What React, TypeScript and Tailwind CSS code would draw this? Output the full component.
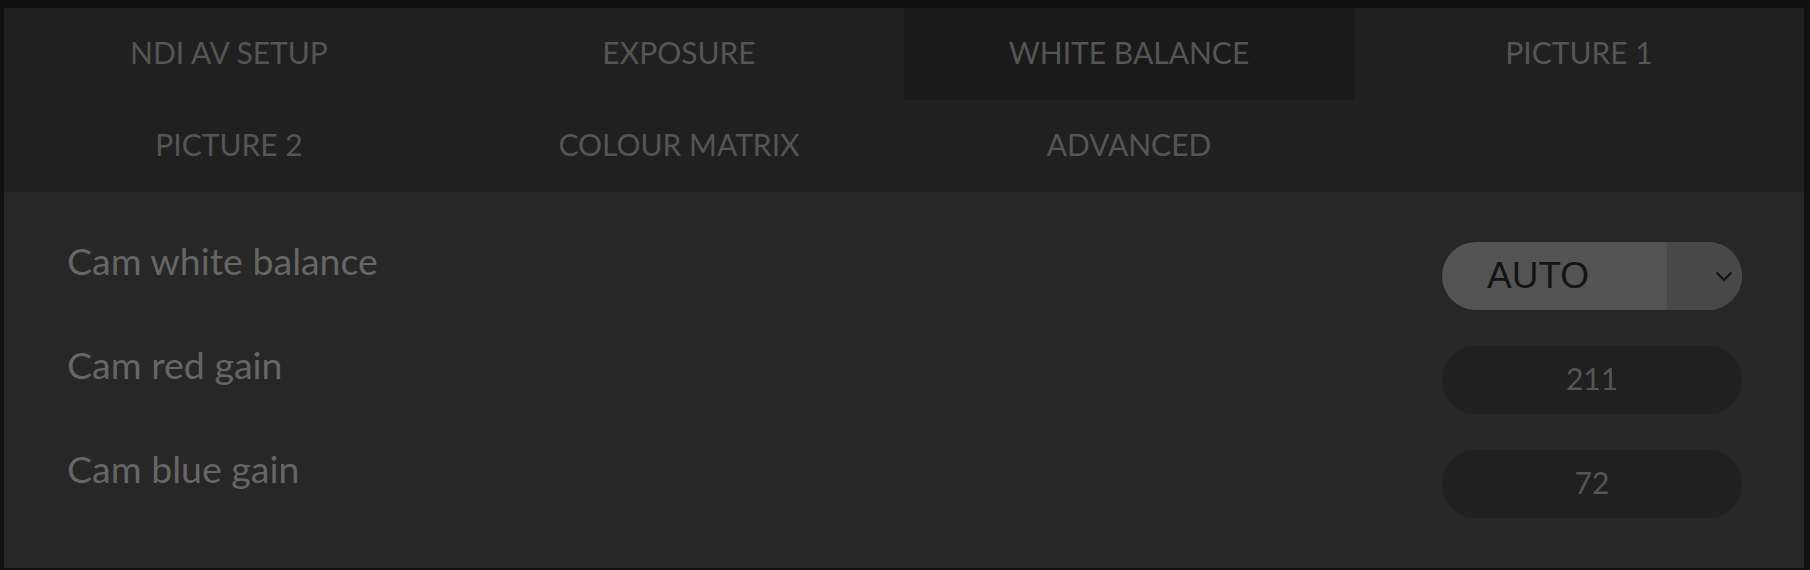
import { useState } from "react";

const tabs = [
  "NDI AV SETUP",
  "EXPOSURE",
  "WHITE BALANCE",
  "PICTURE 1",
  "PICTURE 2",
  "COLOUR MATRIX",
  "ADVANCED",
];

const lato = "font-['Lato','Liberation_Sans',sans-serif]";

function Chevron() {
  return (
    <svg width="18" height="11" viewBox="0 0 18 11" fill="none">
      <path d="M1.5 1.5 L9 9 L16.5 1.5" stroke="#141414" strokeWidth="2.2" />
    </svg>
  );
}

function ValueField({ value }: { value: string }) {
  return (
    <div
      className={`flex h-[68px] w-[300px] items-center justify-center rounded-full bg-[#202020] pb-[3px] text-[30px] text-[#555555] ${lato}`}
    >
      {value}
    </div>
  );
}

export default function App() {
  const [active, setActive] = useState("WHITE BALANCE");

  return (
    <div className="h-[570px] w-[1810px] bg-[#111111] pt-[8px] pl-[4px] pr-[6px] pb-[2px]">
      <div className="flex h-full flex-col">
        <div className="grid h-[184px] grid-cols-4 grid-rows-2 bg-[#202020]">
          {tabs.map((tab) => (
            <button
              key={tab}
              type="button"
              onClick={() => setActive(tab)}
              className={`flex items-center justify-center pb-[4px] text-[30px] leading-none text-[#555555] ${lato} ${
                active === tab ? "rounded-b-[4px] bg-[#1a1a1a]" : ""
              }`}
            >
              {tab}
            </button>
          ))}
        </div>

        <div className={`flex flex-1 flex-col gap-[36px] bg-[#272727] pl-[63px] pr-[62px] py-[50px] ${lato}`}>
          <div className="flex h-[68px] items-start justify-between">
            <span className="text-[37.5px] leading-none text-[#666666]">Cam white balance</span>
            <div className="flex h-[68px] w-[300px] overflow-hidden rounded-full bg-[#545454]">
              <div className="flex flex-1 items-center pl-[45px] font-['Liberation_Sans',Arial,sans-serif] text-[37px] text-[#141414]">
                AUTO
              </div>
              <div className="flex w-[75px] items-center justify-end bg-[#484848] pr-[9px]">
                <Chevron />
              </div>
            </div>
          </div>

          <div className="flex h-[68px] items-start justify-between">
            <span className="text-[37.5px] leading-none text-[#666666]">Cam red gain</span>
            <ValueField value="211" />
          </div>

          <div className="flex h-[68px] items-start justify-between">
            <span className="text-[37.5px] leading-none text-[#666666]">Cam blue gain</span>
            <ValueField value="72" />
          </div>
        </div>
      </div>
    </div>
  );
}
